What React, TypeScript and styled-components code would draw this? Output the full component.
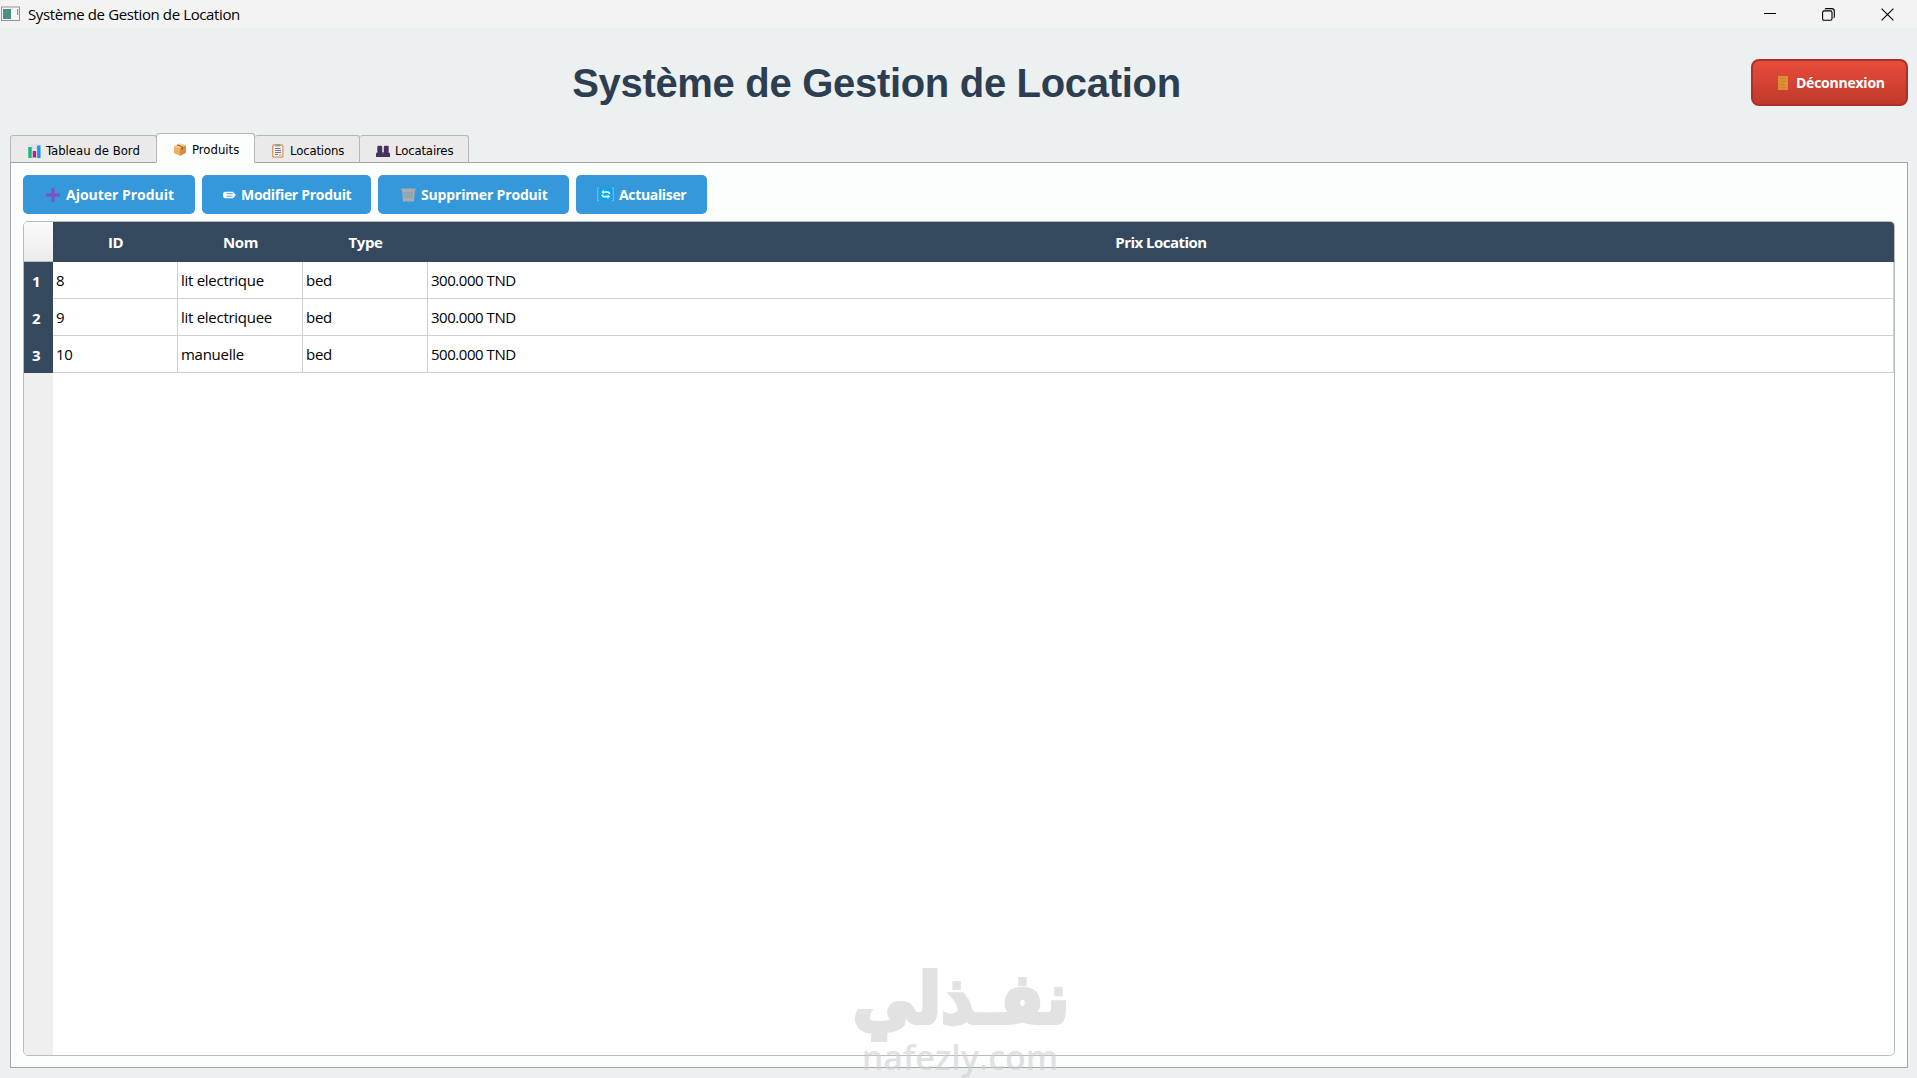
import React from "react";
import styled, { createGlobalStyle } from "styled-components";

const GlobalStyle = createGlobalStyle`
  * { box-sizing: border-box; }
  html, body { margin: 0; padding: 0; }
  body { background: #ecf0f1; overflow: hidden; font-family: "Open Sans", "Noto Sans", sans-serif; }
`;

const Window = styled.div`
  position: relative;
  display: flex;
  flex-direction: column;
  width: 1917px;
  height: 1078px;
  background: #ecf0f1;
  color: #000;
`;

const TitleBar = styled.header`
  display: flex;
  align-items: center;
  justify-content: space-between;
  height: 28px;
  padding: 0 23px 0 1px;
  background: #f3f3f3;
`;

const Caption = styled.div`
  display: flex;
  align-items: center;
  gap: 8px;
  font-size: 15px;
  line-height: 28px;
  letter-spacing: -0.38px;
  white-space: nowrap;
`;

const Controls = styled.div`
  display: flex;
  align-items: center;
  gap: 46px;
`;

const Banner = styled.div`
  display: flex;
  align-items: center;
  height: 105px;
  padding: 4px 9px 0 11px;
`;

const Heading = styled.h1`
  flex: 1;
  margin: 0;
  padding: 1px 9px 0 0;
  text-align: center;
  font: bold 40px/48px "Liberation Sans", Arial, sans-serif;
  letter-spacing: -0.31px;
  color: #2c3e50;
  white-space: nowrap;
`;

const LogoutButton = styled.button`
  display: flex;
  align-items: center;
  width: 157px;
  height: 47px;
  padding: 0 0 0 25px;
  gap: 8px;
  border: 2px solid #a93226;
  border-radius: 8px;
  background: linear-gradient(#e74c3c, #c0392b);
  color: #fff;
  font: bold 14px/20px "Open Sans", "Noto Sans", sans-serif;
  letter-spacing: -0.24px;
`;

const TabBar = styled.nav`
  display: flex;
  align-items: flex-end;
  height: 30px;
  margin-bottom: -1px;
  padding-left: 10px;
  z-index: 1;
`;

const Tab = styled.div<{ $width: number; $active?: boolean; $pad: number; $gap: number; $joined?: boolean }>`
  display: flex;
  align-items: center;
  gap: ${(p) => p.$gap}px;
  width: ${(p) => p.$width}px;
  height: ${(p) => (p.$active ? 30 : 28)}px;
  padding: 3px 0 0 ${(p) => p.$pad}px;
  margin-left: ${(p) => (p.$active ? -1 : 0)}px;
  border: 1px solid #b4b7b8;
  border-bottom-color: ${(p) => (p.$active ? "#fcfdfd" : "#a0a3a4")};
  border-left-width: ${(p) => (p.$joined ? 0 : 1)}px;
  border-radius: 3px 3px 0 0;
  background: ${(p) => (p.$active ? "#fcfdfd" : "#eaeaea")};
  font: 13px/16px "DejaVu Sans Condensed", "DejaVu Sans", sans-serif;
  font-stretch: condensed;
  letter-spacing: ${(p) => (p.$joined ? -0.15 : 0)}px;
  white-space: nowrap;
`;

const Pane = styled.main`
  display: flex;
  flex-direction: column;
  height: 906px;
  margin: 0 9px 0 10px;
  padding: 12px 12px 11px;
  border: 1px solid #a4a8aa;
  background: #fcfdfd;
`;

const Toolbar = styled.div`
  display: flex;
  gap: 7px;
  height: 39px;
  margin-bottom: 7px;
`;

const ActionButton = styled.button<{ $width: number; $pad: number; $gap: number; $tracking: number }>`
  display: flex;
  align-items: center;
  width: ${(p) => p.$width}px;
  height: 39px;
  padding: 0 0 0 ${(p) => p.$pad}px;
  gap: ${(p) => p.$gap}px;
  border: 0;
  border-radius: 5px;
  background: #3498db;
  color: #fff;
  font: bold 14px/20px "Open Sans", "Noto Sans", sans-serif;
  letter-spacing: ${(p) => p.$tracking}px;
  white-space: nowrap;
`;

const TableFrame = styled.section`
  display: flex;
  flex: 1;
  border: 1px solid #b9bcbd;
  border-radius: 5px;
  background: #fff;
  overflow: hidden;
`;

const RowHeader = styled.div`
  display: flex;
  flex-direction: column;
  width: 29px;
  background: #efefef;
`;

const Corner = styled.div`
  height: 40px;
  border-bottom: 1px solid #b9b9b9;
  background: linear-gradient(#fbfbfb, #ececec);
`;

const RowNumber = styled.div`
  height: 37px;
  padding-left: 8px;
  background: #34495e;
  color: #fff;
  font: bold 15px/38px "Open Sans", "Noto Sans", sans-serif;
`;

const Grid = styled.div`
  display: grid;
  flex: 1;
  grid-template-columns: 125px 125px 125px 1fr;
  grid-template-rows: 40px;
  grid-auto-rows: 37px;
`;

const HeadCell = styled.div`
  background: #34495e;
  color: #fff;
  text-align: center;
  font: bold 15px/40px "Open Sans", "Noto Sans", sans-serif;
  letter-spacing: -0.42px;

  &:nth-child(4) { letter-spacing: -0.52px; }
`;

const Cell = styled.div`
  padding-left: 3px;
  border-right: 1px solid #d0d0d0;
  border-bottom: 1px solid #d0d0d0;
  font-size: 15px;
  line-height: 37px;
  letter-spacing: -0.28px;
  white-space: nowrap;

  &:nth-child(4n) { letter-spacing: -0.46px; }
`;

const Watermark = styled.div`
  position: absolute;
  left: 840px;
  top: 950px;
  width: 240px;
  height: 128px;
  pointer-events: none;
`;

const AppIcon = () => (
  <svg width="19" height="16" viewBox="0 0 19 16">
    <rect x="0.5" y="1" width="18" height="13.5" fill="#f4f4f4" stroke="#8e9696" />
    <rect x="2" y="3" width="8" height="10" fill="#4b8f83" />
    <rect x="16" y="3" width="1.2" height="6" fill="#7c9a94" />
  </svg>
);

const MinimizeIcon = () => (
  <svg width="12" height="12" viewBox="0 0 12 12"><path d="M0 5.5h12" stroke="#000" /></svg>
);

const RestoreIcon = () => (
  <svg width="13" height="13" viewBox="0 0 13 13" fill="none" stroke="#000" strokeWidth="1.1">
    <rect x="0.6" y="2.9" width="9.4" height="9.4" rx="1.5" />
    <path d="M3 1.2Q3.4 .6 4.4 .6H9.6Q12.3 .6 12.3 3.2V8.3Q12.3 9.4 11.6 9.8" />
  </svg>
);

const CloseIcon = () => (
  <svg width="13" height="13" viewBox="0 0 13 13"><path d="M.6.6l11.8 11.8M12.4.6L.6 12.4" stroke="#000" strokeWidth="1.1" /></svg>
);

const DoorIcon = () => (
  <svg width="10" height="14" viewBox="0 0 10 14">
    <rect width="10" height="14" fill="#dc8d35" />
    <path d="M2 2.5h6M2 5.5h6M2 8.5h6M2 11.5h6" stroke="#cf8030" />
    <rect x="7" y="7" width="1.5" height="1.3" fill="#e9b257" />
  </svg>
);

const ChartIcon = () => (
  <svg width="13" height="14" viewBox="0 0 13 14">
    <path d="M0 0h13v14H0z" fill="#e2e4ea" />
    <path d="M4.3 0v14M8.6 0v14M0 4h13M0 9h13" stroke="#cfd2d8" strokeWidth=".6" />
    <rect x="0.3" y="3" width="3.4" height="11" fill="#16b978" />
    <rect x="4.8" y="7" width="3.3" height="6.5" fill="#c5158f" />
    <rect x="9.2" y="1.5" width="3.3" height="12.5" fill="#1994e8" />
  </svg>
);

const BoxIcon = () => (
  <svg width="12" height="13" viewBox="0 0 12 13">
    <path d="M0 3.4L6.3.4 12 2.4v7.4l-6 3-6-2.5z" fill="#eeb063" />
    <path d="M0 3.4L6.3.4 12 2.4 5.7 5.2z" fill="#f7cf94" />
    <path d="M5.7 5.2L12 2.4v7.4l-6.2 3z" fill="#d98f42" />
    <path d="M2.6 2.2l5.3 2v2.7l1.1-.5V3.8L3.8 1.6z" fill="#8b5527" />
  </svg>
);

const ClipboardIcon = () => (
  <svg width="12" height="14" viewBox="0 0 12 14">
    <rect x="0.7" y="1" width="10.2" height="12.2" rx="1" fill="#f2f2f5" stroke="#dc9a5a" strokeWidth="1.3" />
    <rect x="3.5" y="0" width="4.8" height="2.4" fill="#9b98a1" />
    <path d="M3 4.5h5.5M3 6.5h6M3 8.5h6M3 10.5h3" stroke="#77747e" />
    <path d="M7 13v-3h4z" fill="#c8c4c5" />
  </svg>
);

const PeopleIcon = () => (
  <svg width="14" height="12" viewBox="0 0 14 12" fill="#47325f">
    <rect x="1.3" y="0.7" width="4.9" height="6.6" rx="1.3" />
    <rect x="7.8" y="0.7" width="4.9" height="6.6" rx="1.3" />
    <path d="M0 12V9Q0 7 2.6 7h8.8Q14 7 14 9v3z" />
    <path d="M7 6.4v2.2" stroke="#a898b3" />
  </svg>
);

const PlusIcon = () => (
  <svg width="14" height="14" viewBox="0 0 14 14"><path d="M7 .2v13.6M0 7h14" stroke="#7459c6" strokeWidth="3.4" /></svg>
);

const PencilIcon = () => (
  <svg width="13" height="8" viewBox="0 0 13 8">
    <path d="M2.3.7h7.5L13 4 9.8 7.3H2.3Q0 7.3 0 4T2.3.7z" fill="#fff" />
    <path d="M3.5 2.7h6M3.5 5.2h6" stroke="#3498db" strokeWidth=".9" />
  </svg>
);

const TrashIcon = () => (
  <svg width="15" height="14" viewBox="0 0 15 14">
    <path d="M.3.5h14.4v2H14L13 13.5H2L1 2.5H.3z" fill="#aaa9ad" />
    <path d="M2.5 4.5h10M2.8 7h9.4M3 9.5h9" stroke="#5d9fce" strokeWidth="1.1" strokeDasharray="1.2 1.3" />
    <path d="M3.6 5.8h8M3.9 8.3h7" stroke="#6da5cb" strokeWidth="1" strokeDasharray="1.2 1.3" />
  </svg>
);

const RefreshIcon = () => (
  <svg width="17" height="15" viewBox="0 0 17 15">
    <rect x="3" y="1" width="11.5" height="12.5" fill="#00a9ed" />
    <path d="M2 .8H.7v12.9H2M15 .8h1.3v12.9H15" stroke="#65c8f3" fill="none" />
    <g fill="none" stroke="#fff" strokeWidth="1.7">
      <path d="M6 5h4.5Q12.4 5 12.4 7" />
      <path d="M11.6 9.6H7.2Q5.2 9.6 5.2 7.6" />
    </g>
    <path d="M7 2.8v4.4L4.2 5zM10.6 7.4v4.4l2.8-2.2z" fill="#fff" />
  </svg>
);

const ROWS = [
  ["8", "lit electrique", "bed", "300.000 TND"],
  ["9", "lit electriquee", "bed", "300.000 TND"],
  ["10", "manuelle", "bed", "500.000 TND"],
];

const COLUMNS = ["ID", "Nom", "Type", "Prix Location"];

const WatermarkArabic = styled.div`
  height: 76px;
  margin-top: 11px;
  text-align: center;
  direction: rtl;
  font: bold 70px/76px "DejaVu Sans", sans-serif;
  color: #e2e2e2;
  -webkit-text-stroke: 4px #e2e2e2;
  white-space: nowrap;
  transform: translateX(1px) scaleX(0.91);
`;

const WatermarkLatin = styled.div`
  margin-top: 2px;
  text-align: center;
  font: 600 34px/36px "Open Sans", sans-serif;
  color: rgba(205, 207, 208, 0.62);
`;

export default function App() {
  return (
    <Window>
      <GlobalStyle />
      <TitleBar>
        <Caption><AppIcon /><span>Système de Gestion de Location</span></Caption>
        <Controls><MinimizeIcon /><RestoreIcon /><CloseIcon /></Controls>
      </TitleBar>
      <Banner>
        <Heading>Système de Gestion de Location</Heading>
        <LogoutButton><DoorIcon /><span>Déconnexion</span></LogoutButton>
      </Banner>
      <TabBar>
        <Tab $width={147} $pad={17} $gap={5}><ChartIcon /><span>Tableau de Bord</span></Tab>
        <Tab $width={99} $pad={17} $gap={6} $active><BoxIcon /><span>Produits</span></Tab>
        <Tab $width={105} $pad={17} $gap={6} $joined><ClipboardIcon /><span>Locations</span></Tab>
        <Tab $width={109} $pad={16} $gap={5} $joined><PeopleIcon /><span>Locataires</span></Tab>
      </TabBar>
      <Pane>
        <Toolbar>
          <ActionButton $width={172} $pad={23} $gap={6} $tracking={-0.02}><PlusIcon /><span>Ajouter Produit</span></ActionButton>
          <ActionButton $width={169} $pad={21} $gap={5} $tracking={-0.3}><PencilIcon /><span>Modifier Produit</span></ActionButton>
          <ActionButton $width={191} $pad={23} $gap={5} $tracking={-0.17}><TrashIcon /><span>Supprimer Produit</span></ActionButton>
          <ActionButton $width={131} $pad={21} $gap={5} $tracking={-0.34}><RefreshIcon /><span>Actualiser</span></ActionButton>
        </Toolbar>
        <TableFrame>
          <RowHeader>
            <Corner />
            {ROWS.map((_, i) => <RowNumber key={i}>{i + 1}</RowNumber>)}
          </RowHeader>
          <Grid>
            {COLUMNS.map((c) => <HeadCell key={c}>{c}</HeadCell>)}
            {ROWS.map((row) => row.map((value, i) => <Cell key={row[0] + i}>{value}</Cell>))}
          </Grid>
        </TableFrame>
      </Pane>
      <Watermark>
        <WatermarkArabic>نفـذلي</WatermarkArabic>
        <WatermarkLatin>nafezly.com</WatermarkLatin>
      </Watermark>
    </Window>
  );
}
